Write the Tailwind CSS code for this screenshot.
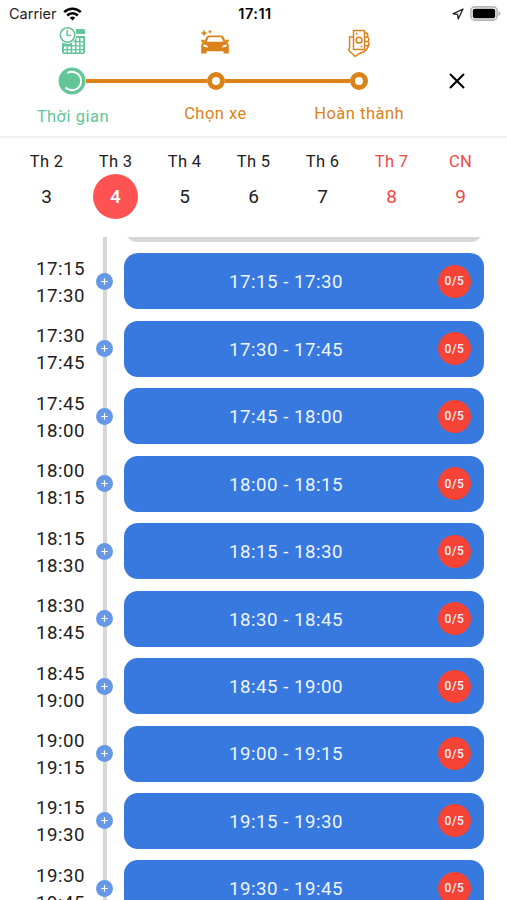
<!DOCTYPE html>
<html lang="vi">
<head>
  <meta charset="UTF-8" />
  <meta name="viewport" content="width=device-width, initial-scale=1.0">
  <title>Đặt lịch - Chọn thời gian</title>

  <!-- Tailwind CSS -->
  <script src="https://cdn.jsdelivr.net/npm/@tailwindcss/browser@4"></script>
</head>

<body class="bg-white font-['Roboto',sans-serif] text-[#202020]">
<div class="flex h-[900px] w-[507px] flex-col overflow-hidden">

  <!-- Status bar -->
  <div class="grid h-[27px] shrink-0 grid-cols-3 items-center pl-[9px] pr-[6px] font-['Inter',sans-serif] text-[14.5px] text-black">
    <div class="flex items-center gap-[6px]">
      <span class="text-[#222]">Carrier</span>
      <svg class="h-[14px] w-[19px]" viewBox="0 0 19 14" fill="none" stroke="#000" stroke-width="2.6">
        <path d="M1.2 5.2a11.8 11.8 0 0 1 16.6 0"/>
        <path d="M4.2 8.500a7.500 7.500 0 0 1 10.600 0"/>
        <path d="M9.500 13.600L6.700 10.800a4 4 0 0 1 5.600 0z" fill="#000" stroke="none"/>
      </svg>
    </div>
    <div class="text-center text-[14.5px] font-semibold tracking-[0.5px]">17:11</div>
    <div class="flex items-center justify-end gap-[6px]">
      <svg class="h-[12px] w-[12px]" viewBox="0 0 12 12" fill="none" stroke="#222" stroke-width="1.3" stroke-linejoin="round">
        <path d="M11 1L1 5.800l4.600.6.6 4.600z"/>
      </svg>
      <svg class="h-[15px] w-[31px]" viewBox="0 0 31 15">
        <rect x=".9" y=".9" width="26.2" height="13.2" rx="4" fill="#fff" stroke="#b5b5b5" stroke-width="1.6"/>
        <rect x="2.8" y="2.8" width="22.4" height="9.4" rx="2" fill="#000"/>
        <path d="M28.400 5q2 .6 2 2.500t-2 2.500z" fill="#b5b5b5"/>
      </svg>
    </div>
  </div>

  <!-- Stepper -->
  <header class="flex h-[111px] shrink-0 border-b-2 border-[#f0f0f0] text-[16.5px] tracking-[0.5px]">
    <div class="grid w-[431px] grid-cols-3">
      <div class="flex flex-col items-center text-[#62c698]">
        <svg class="h-[28px] w-[28px]" viewBox="0 0 28 28">
          <path d="M18 2h7.500q1.500 0 1.500 1.500V7H18z" fill="currentColor"/>
          <path d="M4 16v9q0 2 2 2h19q2 0 2-2V9H17.500q-1 6-7.500 7z" fill="currentColor"/>
          <path d="M18.500 11h2.500v3h-2.500zM22.600 11h2.600v3h-2.600zM14.200 15.200h2.800v3h-2.800zM18.500 15.200h2.600v3h-2.600zM22.600 15.200h2.600v3h-2.600zM6 19.400h2.600v2.600H6zM10 19.400h2.700v2.600H10zM14.200 19.400h2.800v2.600h-2.800zM18.500 19.400h2.600v2.600h-2.600zM22.600 19.400h2.600v2.600h-2.600zM6 23.200h2.600v2.200H6zM10 23.200h2.700v2.200H10zM14.200 23.200h2.800v2.200h-2.800zM18.500 23.200h2.600v2.200h-2.600zM22.600 23.200h2.600v2.200h-2.600z" fill="#fff"/>
          <circle cx="9.500" cy="8" r="9" fill="#fff"/>
          <circle cx="9.500" cy="8" r="7.200" fill="#fff" stroke="currentColor" stroke-width="1.600"/>
          <path d="M9.200 3v5.500h4" fill="none" stroke="currentColor" stroke-width="1.500"/>
        </svg>
        <div class="mt-[12px] flex w-full items-center">
          <span class="h-[4px] flex-1"></span>
          <svg class="h-[28px] w-[28px]" viewBox="0 0 28 28">
            <circle cx="14" cy="14" r="13.500" fill="currentColor"/>
            <path d="M9.300 6.100A9.200 9.200 0 1 1 7.500 20.500" fill="none" stroke="#fff" stroke-width="1.900"/>
          </svg>
          <span class="h-[4px] flex-1 bg-[#db8218]"></span>
        </div>
        <div class="mt-[10px] pl-[2px]">Thời gian</div>
      </div>

      <div class="flex flex-col items-center text-[#db8218]">
        <svg class="h-[28px] w-[30px]" viewBox="0 0 30 28" fill="currentColor">
          <path d="M4 3.200l.9 2 2 .9-2 .9-.9 2-.9-2-2-.9 2-.9zM10 3l.5 1.200 1.200.5-1.200.5L10 6.400l-.5-1.200-1.200-.5 1.200-.5z" stroke="currentColor" stroke-width=".5"/>
          <path fill-rule="evenodd" d="M8.700 8.500h12.600q1.600 0 2.300 1.500l1.900 4 .5-1.300h2.500q.9.400.3 1.500l-1.500 1.200q1.500 1.500 1.500 3.200v8h-5.300v-2.400h-17V26.600H1.200v-8q0-1.700 1.500-3.200l-1.500-1.200q-.6-1.100.3-1.500H4l.5 1.300 1.900-4q.7-1.500 2.300-1.500zM8.800 10.200l-2.200 4.600h16.800l-2.200-4.600zM3.500 17.500v2.200l4.500.8q0-2-1.800-2.500zM26.500 17.500l-2.700.5q-1.800.5-1.800 2.500l4.500-.8z"/>
        </svg>
        <div class="mt-[12px] flex h-[28px] w-full items-center">
          <span class="h-[4px] flex-1 bg-[#db8218]"></span>
          <span class="h-[18px] w-[18px] rounded-full border-[5px] border-[#db8218] bg-white"></span>
          <span class="h-[4px] flex-1 bg-[#db8218]"></span>
        </div>
        <div class="mt-[7px]">Chọn xe</div>
      </div>

      <div class="flex flex-col items-center text-[#db8218]">
        <svg class="h-[30px] w-[24px]" viewBox="0 0 24 30" fill="none" stroke="currentColor" stroke-width="1.500" stroke-linejoin="round">
          <path d="M6.500 3.600h11v19h-11z"/>
          <circle cx="12" cy="13.200" r="2.900"/>
          <path d="M9 6.700h1.500M13.800 19.600h1.500" stroke-width="1.700"/>
          <path d="M6.500 10H2.600v10.500q-.8 1.600-.8 3l6.500 6 3.200-2.500 6-2.500q4-3.500 4-7"/>
          <path d="M17.500 6h2.200q1.800 2 .6 4.200M17.500 10.300h3.200q2.200 2 .2 4.200h-3.400M17.500 14.500h3.500q2.200 2 0 4.200h-3.500"/>
        </svg>
        <div class="mt-[10px] flex h-[28px] w-full items-center">
          <span class="h-[4px] flex-1 bg-[#db8218]"></span>
          <span class="h-[18px] w-[18px] rounded-full border-[5px] border-[#db8218] bg-white"></span>
          <span class="h-[4px] flex-1"></span>
        </div>
        <div class="mt-[7px]">Hoàn thành</div>
      </div>
    </div>

    <button class="mt-[46px] ml-[18px] h-[16px] w-[16px]" aria-label="Đóng">
      <svg class="h-[16px] w-[16px]" viewBox="0 0 16 16" fill="none" stroke="#000" stroke-width="2.100">
        <path d="M1 1l14 14M15 1L1 15"/>
      </svg>
    </button>
  </header>

  <!-- Week days -->
  <div id="week" class="grid h-[99px] shrink-0 grid-cols-7 px-3 pt-[12px]"></div>

  <!-- Time slots -->
  <main class="flex-1 overflow-hidden">
    <div id="slots" class="relative -mt-[51px] flex flex-col gap-[11.45px]">
      <div class="absolute inset-y-0 left-[103px] w-[3.5px] bg-[#d6d6d6]"></div>
      <div class="ml-[124px] h-[56px] w-[360px] shrink-0 rounded-[14px] bg-[#d6d6d6]"></div>
    </div>
  </main>
</div>

<script>
const days = [
  ['Th 2', 3], ['Th 3', 4], ['Th 4', 5], ['Th 5', 6], ['Th 6', 7], ['Th 7', 8], ['CN', 9]
];
const selectedDay = 4;

document.getElementById('week').innerHTML = days.map(([name, day], i) => {
  const weekend = i > 4;
  const circle = day === selectedDay ? 'bg-[#ff5252] text-white font-medium' : '';
  return `
  <div class="flex flex-col items-center ${weekend ? 'text-[#f04a43]' : ''}">
    <span class="text-[16.5px] leading-[24px] tracking-[0.3px]">${name}</span>
    <span class="flex h-[45px] w-[45px] items-center justify-center rounded-full pt-px text-[19px] ${circle}">${day}</span>
  </div>`;
}).join('');

// 15 minute slots
const times = ['17:15', '17:30', '17:45', '18:00', '18:15', '18:30', '18:45', '19:00', '19:15', '19:30', '19:45'];
const slots = document.getElementById('slots');

for (let i = 0; i < times.length - 1; i++) {
  slots.insertAdjacentHTML('beforeend', `
  <div class="relative flex h-[56px] shrink-0 items-center tracking-[0.5px]">
    <div class="w-[96px] pt-[3px] pl-[36px] text-[18.7px] leading-[27px]">${times[i]}<br>${times[i + 1]}</div>
    <svg class="h-[17px] w-[17px]" viewBox="0 0 17 17">
      <circle cx="8.500" cy="8.500" r="8.500" fill="#6698e6"/>
      <path d="M8.500 5.200v6.600M5.200 8.500h6.600" stroke="#fff" stroke-width="1.200"/>
    </svg>
    <button class="ml-[11px] flex h-[56px] w-[360px] items-center rounded-[14px] bg-[#3879df] pr-[13px] pl-[10px] text-[18.7px] text-[#eef4ff]">
      <span class="flex-1 pt-[2px] text-center">${times[i]} - ${times[i + 1]}</span>
      <span class="flex h-[33px] w-[33px] items-center justify-center rounded-full bg-[#f54336] text-[12px] font-medium">0/5</span>
    </button>
  </div>`);
}
</script>
</body>
</html>
